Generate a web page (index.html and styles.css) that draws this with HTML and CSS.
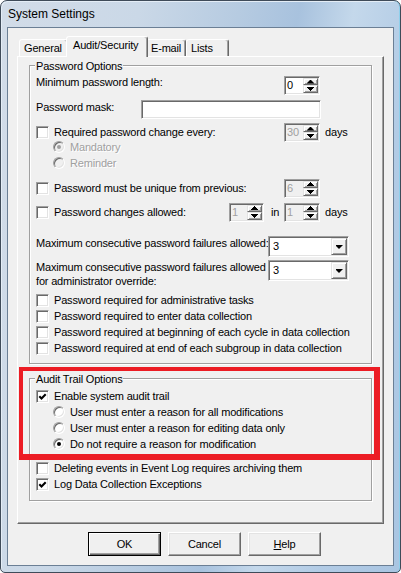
FILE: index.html
```html
<!DOCTYPE html>
<html lang="en">
<head>
<meta charset="utf-8">
<title>System Settings</title>
<link rel="stylesheet" href="styles.css">
</head>
<body>
<div class="window">
  <div class="titlebar">System Settings</div>
  <div class="client">
    <div class="tabs">
      <div class="tab t-general">General</div>
      <div class="tab t-audit selected">Audit/Security</div>
      <div class="tab t-email">E-mail</div>
      <div class="tab t-lists">Lists</div>
    </div>
    <div class="panel">
      <div class="group g-password">
        <div class="group-title">Password Options</div>

        <div class="row r1">
          <span class="lbl w248">Minimum password length:</span>
          <span class="spin w36"><span class="spin-val">0</span><span class="updown"><span class="ud up"><i class="arrow"></i></span><span class="ud down"><i class="arrow"></i></span></span></span>
        </div>

        <div class="row r2">
          <span class="lbl w105 lift">Password mask:</span>
          <span class="textbox"></span>
        </div>

        <div class="row r3">
          <span class="cb"></span>
          <span class="lbl w230">Required password change every:</span>
          <span class="spin w36 disabled"><span class="spin-val">30</span><span class="updown"><span class="ud up"><i class="arrow"></i></span><span class="ud down"><i class="arrow"></i></span></span></span>
          <span class="unit">days</span>
        </div>

        <div class="row r4">
          <span class="rb indent disabled on"></span>
          <span class="lbl dim">Mandatory</span>
        </div>

        <div class="row r5">
          <span class="rb indent disabled"></span>
          <span class="lbl dim">Reminder</span>
        </div>

        <div class="row r6">
          <span class="cb"></span>
          <span class="lbl w230">Password must be unique from previous:</span>
          <span class="spin w36 disabled"><span class="spin-val">6</span><span class="updown"><span class="ud up"><i class="arrow"></i></span><span class="ud down"><i class="arrow"></i></span></span></span>
        </div>

        <div class="row r7">
          <span class="cb"></span>
          <span class="lbl w175">Password changes allowed:</span>
          <span class="spin w35 disabled"><span class="spin-val">1</span><span class="updown"><span class="ud up"><i class="arrow"></i></span><span class="ud down"><i class="arrow"></i></span></span></span>
          <span class="lbl in">in</span>
          <span class="spin w36 disabled"><span class="spin-val">1</span><span class="updown"><span class="ud up"><i class="arrow"></i></span><span class="ud down"><i class="arrow"></i></span></span></span>
          <span class="unit">days</span>
        </div>

        <div class="row r8">
          <span class="lbl w232 lift">Maximum consecutive password failures allowed:</span>
          <span class="combo"><span class="combo-val">3</span><span class="combo-btn"><i class="arrow"></i></span></span>
        </div>

        <div class="row r9">
          <span class="lbl w232 two-line">Maximum consecutive password failures allowed<br>for administrator override:</span>
          <span class="combo"><span class="combo-val">3</span><span class="combo-btn"><i class="arrow"></i></span></span>
        </div>

        <div class="row r10">
          <span class="cb"></span>
          <span class="lbl">Password required for administrative tasks</span>
        </div>
        <div class="row r11">
          <span class="cb"></span>
          <span class="lbl">Password required to enter data collection</span>
        </div>
        <div class="row r11">
          <span class="cb"></span>
          <span class="lbl">Password required at beginning of each cycle in data collection</span>
        </div>
        <div class="row r11">
          <span class="cb"></span>
          <span class="lbl">Password required at end of each subgroup in data collection</span>
        </div>
      </div>

      <div class="group g-audit">
        <div class="group-title">Audit Trail Options</div>
        <div class="row a-row">
          <span class="cb"><svg width="11" height="11" viewBox="0 0 11 11"><polyline points="2.3,5.3 4.5,7.5 8.7,3.3" fill="none" stroke="#000" stroke-width="2.1"/></svg></span>
          <span class="lbl">Enable system audit trail</span>
        </div>
        <div class="row a-row">
          <span class="rb indent"></span>
          <span class="lbl">User must enter a reason for all modifications</span>
        </div>
        <div class="row a-row">
          <span class="rb indent"></span>
          <span class="lbl">User must enter a reason for editing data only</span>
        </div>
        <div class="row a-row">
          <span class="rb indent on"></span>
          <span class="lbl">Do not require a reason for modification</span>
        </div>
        <div class="row a-row a-gap">
          <span class="cb"></span>
          <span class="lbl">Deleting events in Event Log requires archiving them</span>
        </div>
        <div class="row a-row">
          <span class="cb"><svg width="11" height="11" viewBox="0 0 11 11"><polyline points="2.3,5.3 4.5,7.5 8.7,3.3" fill="none" stroke="#000" stroke-width="2.1"/></svg></span>
          <span class="lbl">Log Data Collection Exceptions</span>
        </div>
      </div>
    </div>

    <div class="buttons">
      <div class="btn default">OK</div>
      <div class="btn">Cancel</div>
      <div class="btn"><span><u>H</u>elp</span></div>
    </div>
  </div>
  <div class="highlight"></div>
</div>
</body>
</html>
```

FILE: styles.css
```css
* {
  box-sizing: border-box;
}

html,
body {
  margin: 0;
  padding: 0;
}

body {
  width: 401px;
  height: 573px;
  overflow: hidden;
  background: #ffffff;
  font-family: "Liberation Sans", Arial, sans-serif;
  font-size: 11px;
  line-height: 13px;
  color: #000;
  letter-spacing: -0.18px;
}

/* ---------- window frame ---------- */
.window {
  position: relative;
  width: 401px;
  height: 573px;
  display: flex;
  flex-direction: column;
  padding: 0 6px 6px 6px;
  border: 1px solid #3f4b59;
  border-radius: 7px 7px 5px 5px;
  background: linear-gradient(100deg, #d2dce8 0%, #cad8e7 28%, #b6cbe1 48%, #a8c2de 60%, #c4d8eb 71%, #b2cbe5 84%, #a9c5e2 100%);
  box-shadow: inset -1px 0 0 #8fd0ec, inset 1px 1px 0 #e4edf6;
}

.titlebar {
  flex: none;
  height: 26px;
  line-height: 26px;
  padding-left: 1px;
  font-size: 12px;
  letter-spacing: 0;
  color: #000;
}

.client {
  flex: 1;
  border: 1px solid #6b7f95;
  background: #f0f0f0;
  padding-top: 8px;
}

/* ---------- tabs ---------- */
.tabs {
  position: relative;
  z-index: 1;
  display: flex;
  align-items: flex-start;
  height: 21px;
  margin: 0 0 -1px 11px;
}

.tab {
  height: 17px;
  margin-top: 3px;
  padding: 2px 0 0 4px;
  background: #f0f0f0;
  border-style: solid;
  border-width: 1px 1px 0 1px;
  border-color: #ffffff #696969 transparent #ffffff;
  border-radius: 3px 3px 0 0;
  box-shadow: inset -1px 0 0 #a0a0a0;
  white-space: nowrap;
}

.t-general { width: 49px; }
.t-email { width: 40px; }
.t-lists { width: 43px; }

.tab.selected {
  position: relative;
  z-index: 2;
  width: 82px;
  height: 21px;
  margin: 0 -2px;
  padding-left: 6px;
}

/* ---------- tab page ---------- */
.panel {
  width: 367px;
  height: 468px;
  margin-left: 9px;
  padding: 8px 0 0 11px;
  border-style: solid;
  border-width: 1px;
  border-color: #ffffff #696969 #696969 #ffffff;
  box-shadow: inset -1px -1px 0 #a0a0a0;
}

/* ---------- group boxes ---------- */
.group {
  position: relative;
  width: 343px;
  border: 1px solid #a0a0a0;
  box-shadow: 1px 1px 0 #ffffff, inset 1px 1px 0 #ffffff;
  padding-left: 6px;
}

.g-password {
  padding-top: 10px;
  padding-bottom: 7px;
}

.g-audit {
  margin-top: 14px;
  padding-top: 9px;
  padding-bottom: 8px;
}

.group-title {
  position: absolute;
  top: -6px;
  left: 5px;
  padding: 0 1px;
  background: #f0f0f0;
  white-space: nowrap;
}

/* ---------- rows ---------- */
.row {
  display: flex;
  align-items: center;
  white-space: nowrap;
}

.r1 { height: 19px; align-items: flex-start; }
.r2 { height: 19px; margin-top: 5px; align-items: flex-start; }
.r3 { height: 15px; margin-top: 6px; }
.r4 { height: 14px; }
.r5 { height: 14px; margin-top: 2px; }
.r6 { height: 16px; margin-top: 10px; }
.r7 { height: 16px; margin-top: 8px; }
.r8 { height: 21px; margin-top: 16px; align-items: flex-start; }
.r9 { height: 28px; margin-top: 3px; align-items: flex-start; }
.r10 { height: 16px; margin-top: 4px; }
.r11 { height: 16px; }

.a-row { height: 16px; }
.a-gap { margin-top: 8px; }

.lbl {
  flex: none;
  display: block;
}

.lift { margin-top: 1px; }

.w248 { width: 248px; }
.w105 { width: 105px; }
.w230 { width: 230px; }
.w175 { width: 175px; }
.w232 { width: 232px; }

.two-line {
  line-height: 14px;
}

.in {
  width: 13px;
  margin-left: 7px;
}

.unit {
  margin-left: 5px;
}

.dim {
  color: #a0a0a0;
  text-shadow: 1px 1px 0 #ffffff;
}

/* ---------- checkbox ---------- */
.cb {
  flex: none;
  width: 13px;
  height: 13px;
  margin-right: 5px;
  background: #ffffff;
  border: 1px solid;
  border-color: #a0a0a0 #ffffff #ffffff #a0a0a0;
  box-shadow: inset 1px 1px 0 #696969, inset -1px -1px 0 #e3e3e3;
}

.cb svg {
  display: block;
}

/* ---------- radio ---------- */
.rb {
  flex: none;
  width: 12px;
  height: 12px;
  margin-right: 5px;
  border-radius: 50%;
  background: #ffffff;
  border: 1px solid;
  border-color: #a0a0a0 #ffffff #ffffff #a0a0a0;
  box-shadow: inset 1px 1px 0 #696969, inset -1px -1px 0 #e3e3e3;
  display: flex;
  align-items: center;
  justify-content: center;
}

.rb.indent {
  margin-left: 17px;
}

.rb.on::after {
  content: "";
  width: 4px;
  height: 4px;
  border-radius: 50%;
  background: #000;
}

.rb.disabled {
  background: #f0f0f0;
}

.rb.disabled.on::after {
  background: #a0a0a0;
}

/* ---------- sunken fields ---------- */
.spin,
.textbox,
.combo {
  flex: none;
  display: flex;
  background: #ffffff;
  border: 1px solid;
  border-color: #a0a0a0 #ffffff #ffffff #a0a0a0;
  box-shadow: inset 1px 1px 0 #696969, inset -1px -1px 0 #e3e3e3;
  padding: 1px;
}

.spin {
  height: 19px;
}

.w36 { width: 36px; }
.w35 { width: 35px; }

.spin.disabled {
  background: #f0f0f0;
}

.spin-val {
  flex: 1;
  padding-left: 1px;
  line-height: 15px;
}

.spin.disabled .spin-val {
  color: #a0a0a0;
}

.updown {
  width: 15px;
  display: flex;
  flex-direction: column;
}

.ud,
.combo-btn {
  display: flex;
  align-items: center;
  justify-content: center;
  background: #f0f0f0;
  border: 1px solid;
  border-color: #e3e3e3 #696969 #696969 #e3e3e3;
  box-shadow: inset 1px 1px 0 #ffffff, inset -1px -1px 0 #a0a0a0;
}

.ud.up { height: 7px; }
.ud.down { height: 8px; }

.arrow {
  display: block;
  flex: none;
  width: 7px;
  height: 4px;
  background: #000;
  clip-path: polygon(3px 0, 4px 0, 4px 1px, 5px 1px, 5px 2px, 6px 2px, 6px 3px, 7px 3px, 7px 4px, 0 4px, 0 3px, 1px 3px, 1px 2px, 2px 2px, 2px 1px, 3px 1px);
}

.ud.down .arrow,
.combo-btn .arrow {
  transform: scaleY(-1);
}

.textbox {
  width: 180px;
  height: 19px;
}

.combo {
  width: 81px;
  height: 21px;
}

.combo-val {
  flex: 1;
  padding-left: 3px;
  line-height: 17px;
}

.combo-btn {
  width: 16px;
}

/* ---------- buttons ---------- */
.buttons {
  display: flex;
  gap: 7px;
  margin: 8px 0 0 80px;
}

.btn {
  width: 73px;
  height: 24px;
  display: flex;
  align-items: center;
  justify-content: center;
  background: #f0f0f0;
  border: 1px solid;
  border-color: #ffffff #696969 #696969 #ffffff;
  box-shadow: inset -1px -1px 0 #a0a0a0, inset 1px 1px 0 #e3e3e3;
}

.btn.default {
  border-color: #000000;
  box-shadow: inset 1px 1px 0 #ffffff, inset -1px -1px 0 #696969, inset -2px -2px 0 #a0a0a0;
}

/* ---------- annotation ---------- */
.highlight {
  position: absolute;
  left: 18px;
  top: 366px;
  width: 361px;
  height: 93px;
  border-style: solid;
  border-color: #ec1c24;
  border-width: 4px 6px 6px 4px;
  pointer-events: none;
}
```
